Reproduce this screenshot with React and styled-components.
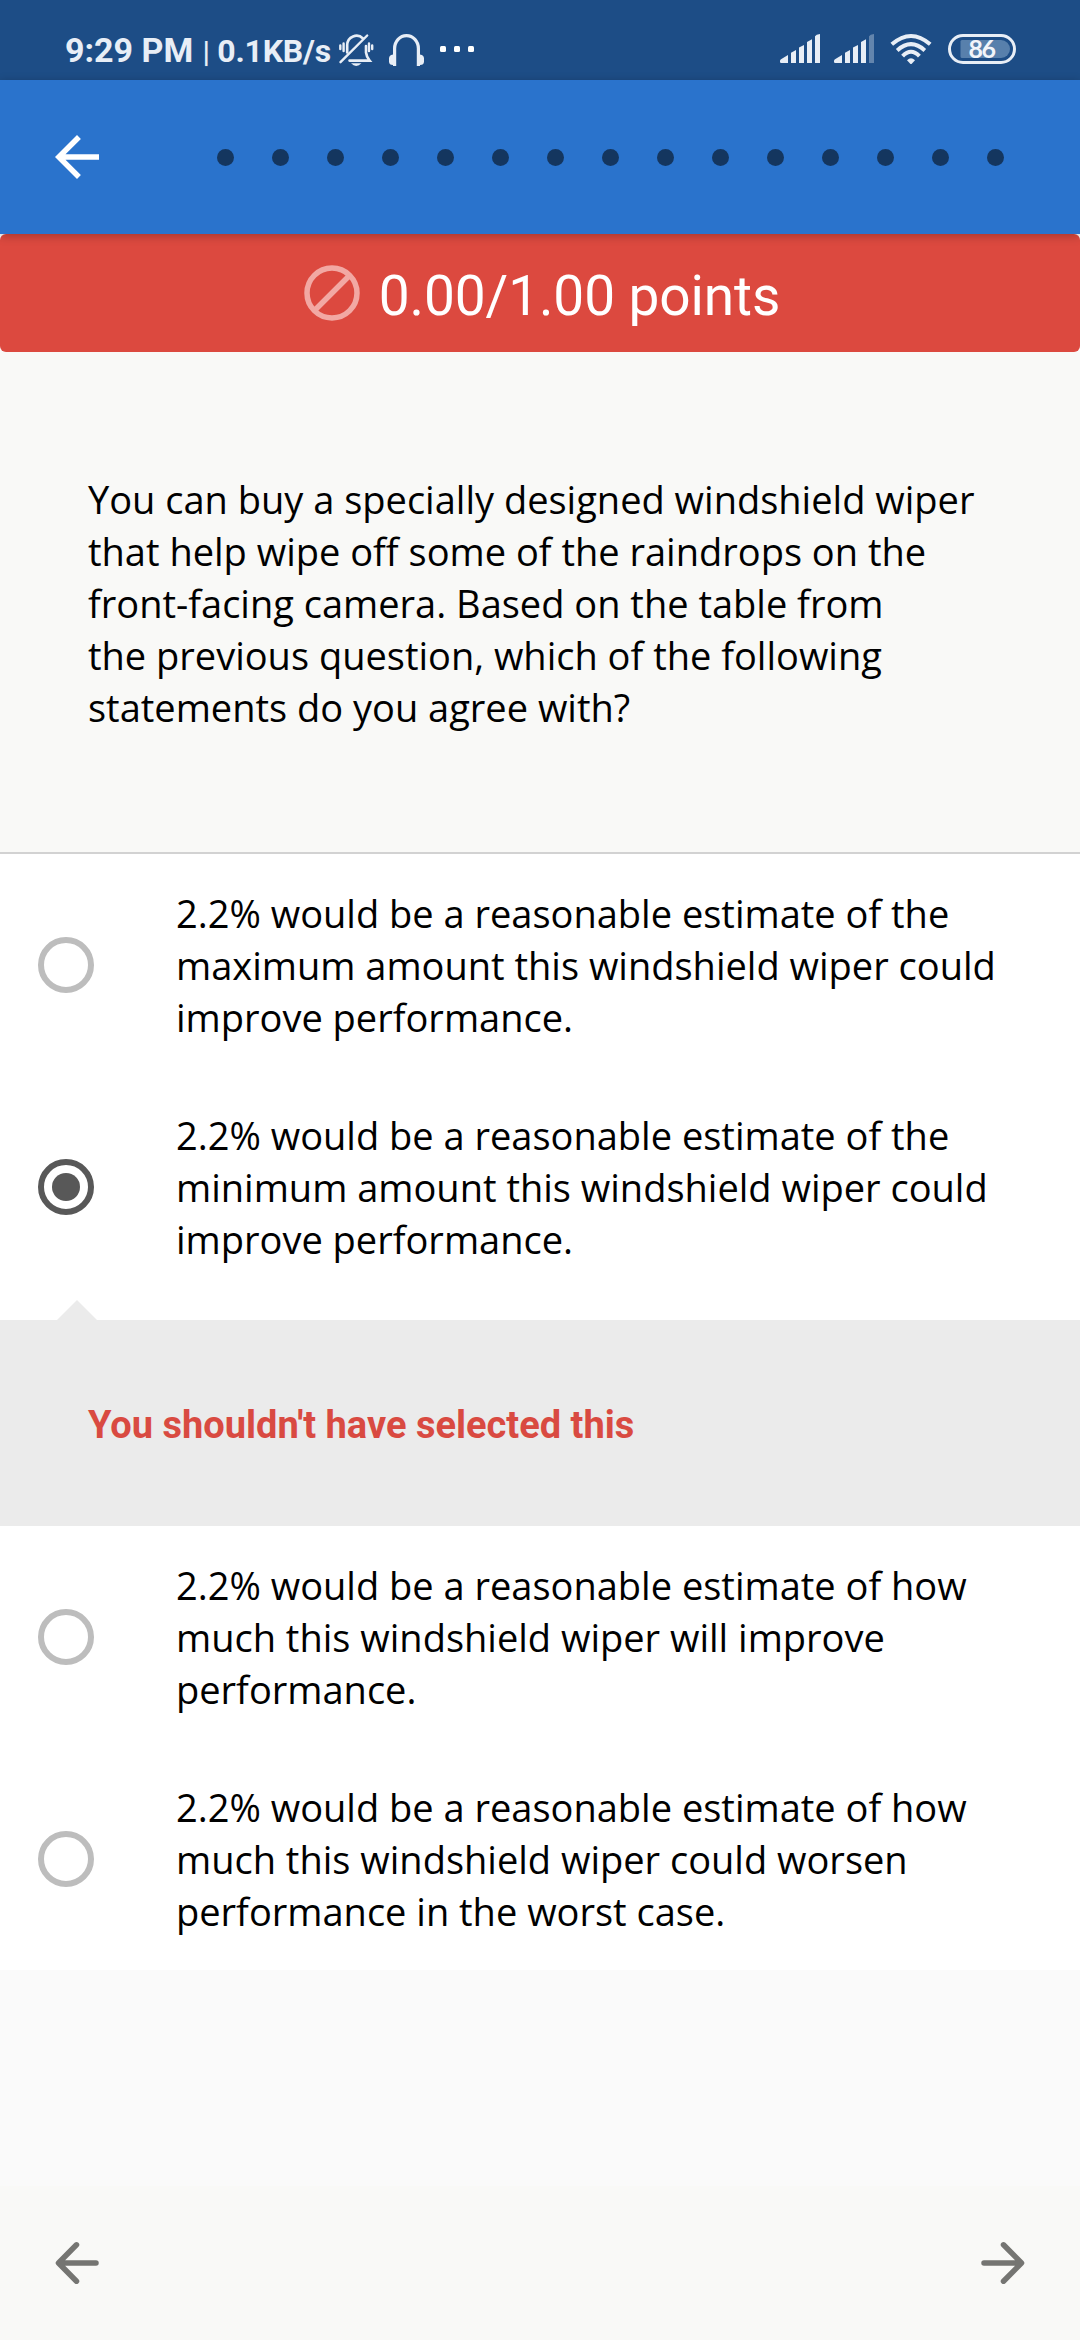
import React from "react";
import styled, { createGlobalStyle } from "styled-components";

const GlobalStyle = createGlobalStyle`
  *, *::before, *::after { box-sizing: border-box; }
  body { margin: 0; background: #fafafa; }
  p, h1 { margin: 0; }
`;

const Screen = styled.div`
  width: 1080px;
  height: 2340px;
  display: flex;
  flex-direction: column;
  overflow: hidden;
  background: #fafafa;
  font-family: "Open Sans", "Noto Sans", sans-serif;
  font-size: 38px;
  line-height: 52px;
  color: #000;
`;

const StatusBar = styled.header`
  flex: none;
  height: 80px;
  padding: 20px 64px 0 65px;
  display: flex;
  justify-content: space-between;
  align-items: flex-start;
  background: #1d4d86;
  color: #e8eef6;
  font-family: Roboto, sans-serif;
  font-weight: 700;
`;

const StatusGroup = styled.div`
  display: flex;
  align-items: center;
  height: 58px;
`;

const StatusText = styled.div`
  display: flex;
  align-items: baseline;
  width: 266px;
  padding-top: 3px;
  line-height: 58px;
  white-space: pre;
`;

const Clock = styled.span`
  width: 138px;
  font-size: 34px;
`;

const Separator = styled.span`
  width: 15px;
  font-size: 30px;
  font-weight: 500;
`;

const NetSpeed = styled.span`
  font-size: 32px;
  letter-spacing: -0.2px;
`;

const StatusIcon = styled.svg`
  display: block;
  flex: none;
  overflow: visible;
  margin-left: ${(p) => p.$gap || 0}px;
`;

const AppBar = styled.nav`
  flex: none;
  height: 154px;
  padding: 0 76px 0 44px;
  display: flex;
  align-items: center;
  justify-content: space-between;
  background: #2a73cc;
  box-shadow: 0 2px 9px rgba(0, 0, 0, 0.26);
  z-index: 1;
`;

const IconButton = styled.button`
  width: 66px;
  height: 66px;
  padding: 0;
  border: 0;
  background: none;
  color: ${(p) => p.$color};
  svg { display: block; }
`;

const Dots = styled.div`
  display: flex;
  gap: 38px;
`;

const Dot = styled.span`
  width: 17px;
  height: 17px;
  border-radius: 50%;
  background: #14365f;
`;

const ScoreBanner = styled.section`
  flex: none;
  height: 118px;
  display: flex;
  align-items: center;
  justify-content: center;
  gap: 19px;
  padding-left: 4px;
  border-radius: 6px;
  background: #dc493f;
  color: #fff;
  font-family: Roboto, sans-serif;
  font-size: 55px;
  line-height: 64px;
  letter-spacing: -0.1px;
`;

const Score = styled.span`
  padding-top: 6px;
`;

const Question = styled.section`
  flex: none;
  height: 502px;
  padding: 121px 88px 0;
  background: #f9f9f7;
  border-bottom: 2px solid #d2d2d2;
  white-space: pre-line;
`;

const Option = styled.label`
  flex: none;
  height: 222px;
  padding: 0 66px 0 38px;
  display: flex;
  align-items: center;
  gap: 82px;
  background: #fff;
  white-space: pre-line;
`;

const Radio = styled.span`
  flex: none;
  width: 56px;
  height: 56px;
  display: grid;
  place-items: center;
  border: 6px solid ${(p) => (p.$on ? "#585858" : "#bdbdbd")};
  border-radius: 50%;
  &::after {
    content: "";
    width: 28px;
    height: 28px;
    border-radius: 50%;
    background: ${(p) => (p.$on ? "#585858" : "transparent")};
  }
`;

const Pointer = styled.div`
  flex: none;
  height: 22px;
  padding: 2px 0 0 57px;
  background: #fff;
  svg { display: block; }
`;

const Feedback = styled.section`
  flex: none;
  height: 206px;
  padding: 4px 88px 0;
  display: flex;
  align-items: center;
  background: #ebebeb;
  color: #d94a41;
  font-family: Roboto, sans-serif;
  font-weight: 700;
  font-size: 38px;
`;

const Footer = styled.footer`
  flex: none;
  margin-top: auto;
  height: 154px;
  padding: 0 44px;
  display: flex;
  align-items: center;
  justify-content: space-between;
  background: #f9f9f7;
`;

const SignalIcon = ({ gap, weak }) => (
  <StatusIcon $gap={gap} width="40" height="30" viewBox="0 0 40 30" fill="currentColor">
    <path d="M0 27Q0 26 1 25.3L8 21V29H1.2Q0 29 0 28Z" />
    <path d="M11 18.7L16 16V29H11Z" />
    <path d="M19 13.5L24 11V29H19Z" />
    <path d="M27 8L32 5.300V29H27Z" />
    <path d="M35 2.2Q36 .5 40 0V29H35Z" opacity={weak ? 0.35 : 1} />
  </StatusIcon>
);

const RoundedArrow = ({ flip }) => (
  <svg width="66" height="66" viewBox="0 0 66 66" fill="none" stroke="currentColor"
    strokeWidth="5.5" strokeLinecap="round" strokeLinejoin="round">
    <path d={flip ? "M14 33H50M33.500 14.800L51.500 33L33.500 51.200" : "M52 33H16M32.500 14.800L14.500 33L32.500 51.200"} />
  </svg>
);

const options = [
  {
    text: "2.2% would be a reasonable estimate of the\nmaximum amount this windshield wiper could\nimprove performance.",
  },
  {
    text: "2.2% would be a reasonable estimate of the\nminimum amount this windshield wiper could\nimprove performance.",
    selected: true,
    feedback: "You shouldn't have selected this",
  },
  {
    text: "2.2% would be a reasonable estimate of how\nmuch this windshield wiper will improve\nperformance.",
  },
  {
    text: "2.2% would be a reasonable estimate of how\nmuch this windshield wiper could worsen\nperformance in the worst case.",
  },
];

const question =
  "You can buy a specially designed windshield wiper\nthat help wipe off some of the raindrops on the\nfront-facing camera. Based on the table from\nthe previous question, which of the following\nstatements do you agree with?";

export default function App() {
  return (
    <Screen>
      <GlobalStyle />
      <StatusBar>
        <StatusGroup>
          <StatusText>
            <Clock>9:29 PM</Clock>
            <Separator>|</Separator>
            <NetSpeed>0.1KB/s</NetSpeed>
          </StatusText>
          <StatusIcon $gap={8} width="36" height="30" viewBox="0 0 36 30" fill="none"
            stroke="currentColor" strokeWidth="2.6" strokeLinecap="round">
            <path d="M8.200 18.500V11A9.300 9.500 0 0 1 24 4.500M27 12V18.500Q27.500 23 30.600 26.600H10.500" />
            <path d="M1.500 28.200L28.200 1.500M1.300 11.500V15M4.600 9.500V17M33.200 11.500V15M30 9.500V17" strokeWidth="2.400" />
            <path d="M12 29.300H22.500Q17.200 34.600 12 29.300Z" fill="currentColor" stroke="none" />
          </StatusIcon>
          <StatusIcon $gap={14} width="36" height="30" viewBox="0 0 36 30" fill="none"
            stroke="currentColor" strokeWidth="3.2">
            <path d="M5.600 32V14.500A11.900 12.900 0 0 1 29.400 14.500V32" />
            <path d="M7 21.500L4 20.500Q0 21 0 24.500V27.500Q0 31 4 31L7 32ZM28 21.500L31 20.500Q35 21 35 24.500V27.500Q35 31 31 31L28 32Z" fill="currentColor" stroke="none" />
          </StatusIcon>
          <StatusIcon $gap={15} width="36" height="8" viewBox="0 0 36 8" fill="#fff">
            <rect x="0" y="1" width="6" height="6" rx="1.500" />
            <rect x="14" y="1" width="6" height="6" rx="1.500" />
            <rect x="28" y="1" width="6" height="6" rx="1.500" />
          </StatusIcon>
        </StatusGroup>
        <StatusGroup>
          <SignalIcon />
          <SignalIcon gap={14} weak />
          <StatusIcon $gap={16} width="42" height="30" viewBox="0 0 42 30" fill="none"
            stroke="currentColor" strokeWidth="4">
            <path d="M1.800 10.300Q21 -6.300 40.200 10.300M7.200 16.400Q21 4 34.800 16.400M12.600 22.200Q21 13.500 29.400 22.200" />
            <path d="M17 26.300Q21 22 25 26.300L22 29.400Q21 30.400 20 29.400Z" fill="currentColor" stroke="none" />
          </StatusIcon>
          <StatusIcon $gap={16} width="68" height="30" viewBox="0 0 68 30">
            <rect x="1.500" y="1.500" width="65" height="27" rx="13.500" fill="none" stroke="currentColor" strokeWidth="3" />
            <path d="M14 6H53A9 9 0 0 1 53 24H14Q12.500 24 12.500 22.500V7.500Q12.500 6 14 6Z" fill="#5880ac" />
            <text x="33.500" y="24" textAnchor="middle" fontFamily="Lato, sans-serif" fontWeight="700" fontSize="25" letterSpacing="-1.500" fill="#f2f5fa">86</text>
          </StatusIcon>
        </StatusGroup>
      </StatusBar>

      <AppBar>
        <IconButton $color="#fff" aria-label="Back">
          <svg width="66" height="66" viewBox="0 0 24 24" fill="currentColor">
            <path d="M20 11H7.830l5.590-5.590L12 4l-8 8 8 8 1.410-1.410L7.830 13H20v-2z" />
          </svg>
        </IconButton>
        <Dots>
          {Array.from({ length: 15 }, (_, i) => <Dot key={i} />)}
        </Dots>
      </AppBar>

      <ScoreBanner>
        <svg width="56" height="56" viewBox="0 0 56 56" fill="none" stroke="#f2a8a3" strokeWidth="5.500">
          <circle cx="28" cy="28" r="25" />
          <path d="M10.500 45.500L45.500 10.500" />
        </svg>
        <Score>0.00/1.00 points</Score>
      </ScoreBanner>

      <Question>{question}</Question>

      {options.map((o, i) => (
        <React.Fragment key={i}>
          <Option>
            <Radio $on={o.selected} />
            <span>{o.text}</span>
          </Option>
          {o.feedback && (
            <>
              <Pointer>
                <svg width="40" height="20" viewBox="0 0 40 20"><path d="M0 20L20 0L40 20Z" fill="#ebebeb" /></svg>
              </Pointer>
              <Feedback>{o.feedback}</Feedback>
            </>
          )}
        </React.Fragment>
      ))}

      <Footer>
        <IconButton $color="#757572" aria-label="Previous"><RoundedArrow /></IconButton>
        <IconButton $color="#757572" aria-label="Next"><RoundedArrow flip /></IconButton>
      </Footer>
    </Screen>
  );
}
